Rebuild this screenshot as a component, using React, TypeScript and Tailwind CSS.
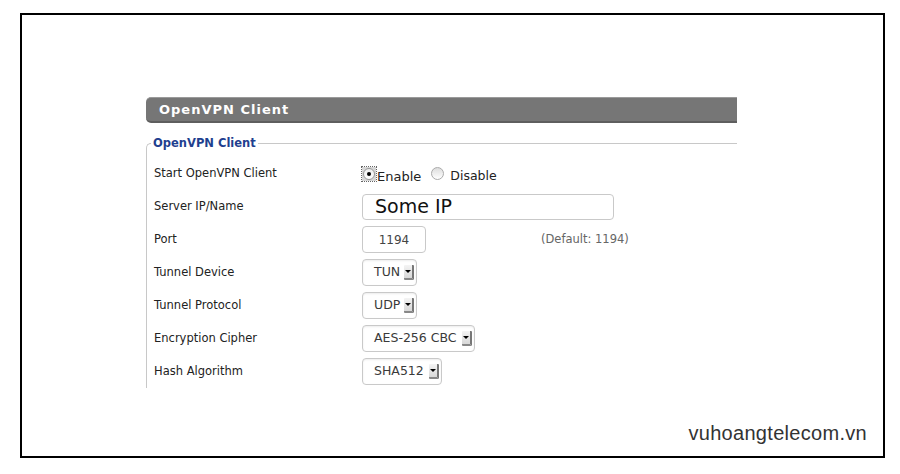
import React from 'react';

const font = { fontFamily: '"DejaVu Sans", Verdana, sans-serif' };

function Select({ value, width }: { value: string; width: string }) {
  return (
    <div className={`flex h-[27px] ${width} items-stretch rounded-[4px] border border-[#c9c9c9] bg-white shadow-[inset_0_1px_2px_rgba(0,0,0,0.08)]`}>
      <span className="flex flex-1 items-center pl-[11px] text-[12.5px] text-[#3a3a3a]">{value}</span>
      <span className="my-[5px] mr-[2px] flex w-[10px] items-center justify-center rounded-[1px] border-r-2 border-b-2 border-r-[#777] border-b-[#888] bg-gradient-to-b from-[#f4f4f4] to-[#d8d8d8]">
        <span className="h-0 w-0 border-x-[3px] border-t-[3px] border-x-transparent border-t-black" />
      </span>
    </div>
  );
}

function Row({ label, children }: { label: string; children: React.ReactNode }) {
  return (
    <div className="flex h-[33px] items-center">
      <div className="w-[215px] pl-[7px] text-[11.5px] text-[#222]">{label}</div>
      <div className="flex flex-1 items-center">{children}</div>
    </div>
  );
}

export default function App() {
  return (
    <div className="h-[474px] w-[900px] bg-white pl-[20px] pt-[13px]" style={font}>
      <div className="relative h-[445px] w-[865px] border-2 border-black pl-[124px] pt-[82px]">
        <div className="flex h-[26px] w-[591px] items-center rounded-l-[5px] border-t border-b-2 border-t-[#9a9a9a] border-b-[#5e5e5e] bg-[#767676] pl-[13px]">
          <span className="text-[13px] font-bold tracking-[1px] text-white">OpenVPN Client</span>
        </div>
        <div className="mt-[20px] w-[591px]">
          <div className="relative h-[245px] rounded-tl-[5px] border-l border-t border-[#c8c8c8]">
            <span className="absolute -top-[9px] left-[4px] bg-white px-[2px] text-[11.5px] font-bold leading-[16px] text-[#1f3f8f]">
              OpenVPN Client
            </span>
            <div className="pt-[13px]">
              <Row label="Start OpenVPN Client">
                <span className="flex h-[14px] w-[14px] items-center justify-center bg-[#d6d6d6] outline-1 outline-dotted outline-[#666]">
                  <span className="flex h-[12px] w-[12px] items-center justify-center rounded-full border border-[#999] bg-gradient-to-b from-[#eee] to-white">
                    <span className="h-[4px] w-[4px] rounded-full bg-black" />
                  </span>
                </span>
                <span className="ml-[1px] mt-[6px] text-[13px] text-[#222]">Enable</span>
                <span className="ml-[10px] h-[13px] w-[13px] rounded-full border border-[#aaa] bg-gradient-to-b from-[#ddd] to-white" />
                <span className="ml-[6px] mt-[6px] text-[12.5px] text-[#222]">Disable</span>
              </Row>
              <Row label="Server IP/Name">
                <div className="flex h-[26px] w-[252px] items-center rounded-[4px] border border-[#c9c9c9] pl-[12px] text-[19px] text-[#111]">
                  Some IP
                </div>
              </Row>
              <Row label="Port">
                <div className="flex h-[27px] w-[64px] items-center justify-center rounded-[4px] border border-[#c9c9c9] text-[12px] text-[#444]">
                  1194
                </div>
                <span className="ml-[115px] text-[11.5px] text-[#666]">(Default: 1194)</span>
              </Row>
              <Row label="Tunnel Device">
                <Select value="TUN" width="w-[55px]" />
              </Row>
              <Row label="Tunnel Protocol">
                <Select value="UDP" width="w-[55px]" />
              </Row>
              <Row label="Encryption Cipher">
                <Select value="AES-256 CBC" width="w-[113px]" />
              </Row>
              <Row label="Hash Algorithm">
                <Select value="SHA512" width="w-[80px]" />
              </Row>
            </div>
          </div>
        </div>
        <div className="absolute bottom-[8px] right-[16px] text-[20px] tracking-[0.3px] text-[#333]" style={{ fontFamily: '"Liberation Sans", Arial, sans-serif' }}>
          vuhoangtelecom.vn
        </div>
      </div>
    </div>
  );
}
